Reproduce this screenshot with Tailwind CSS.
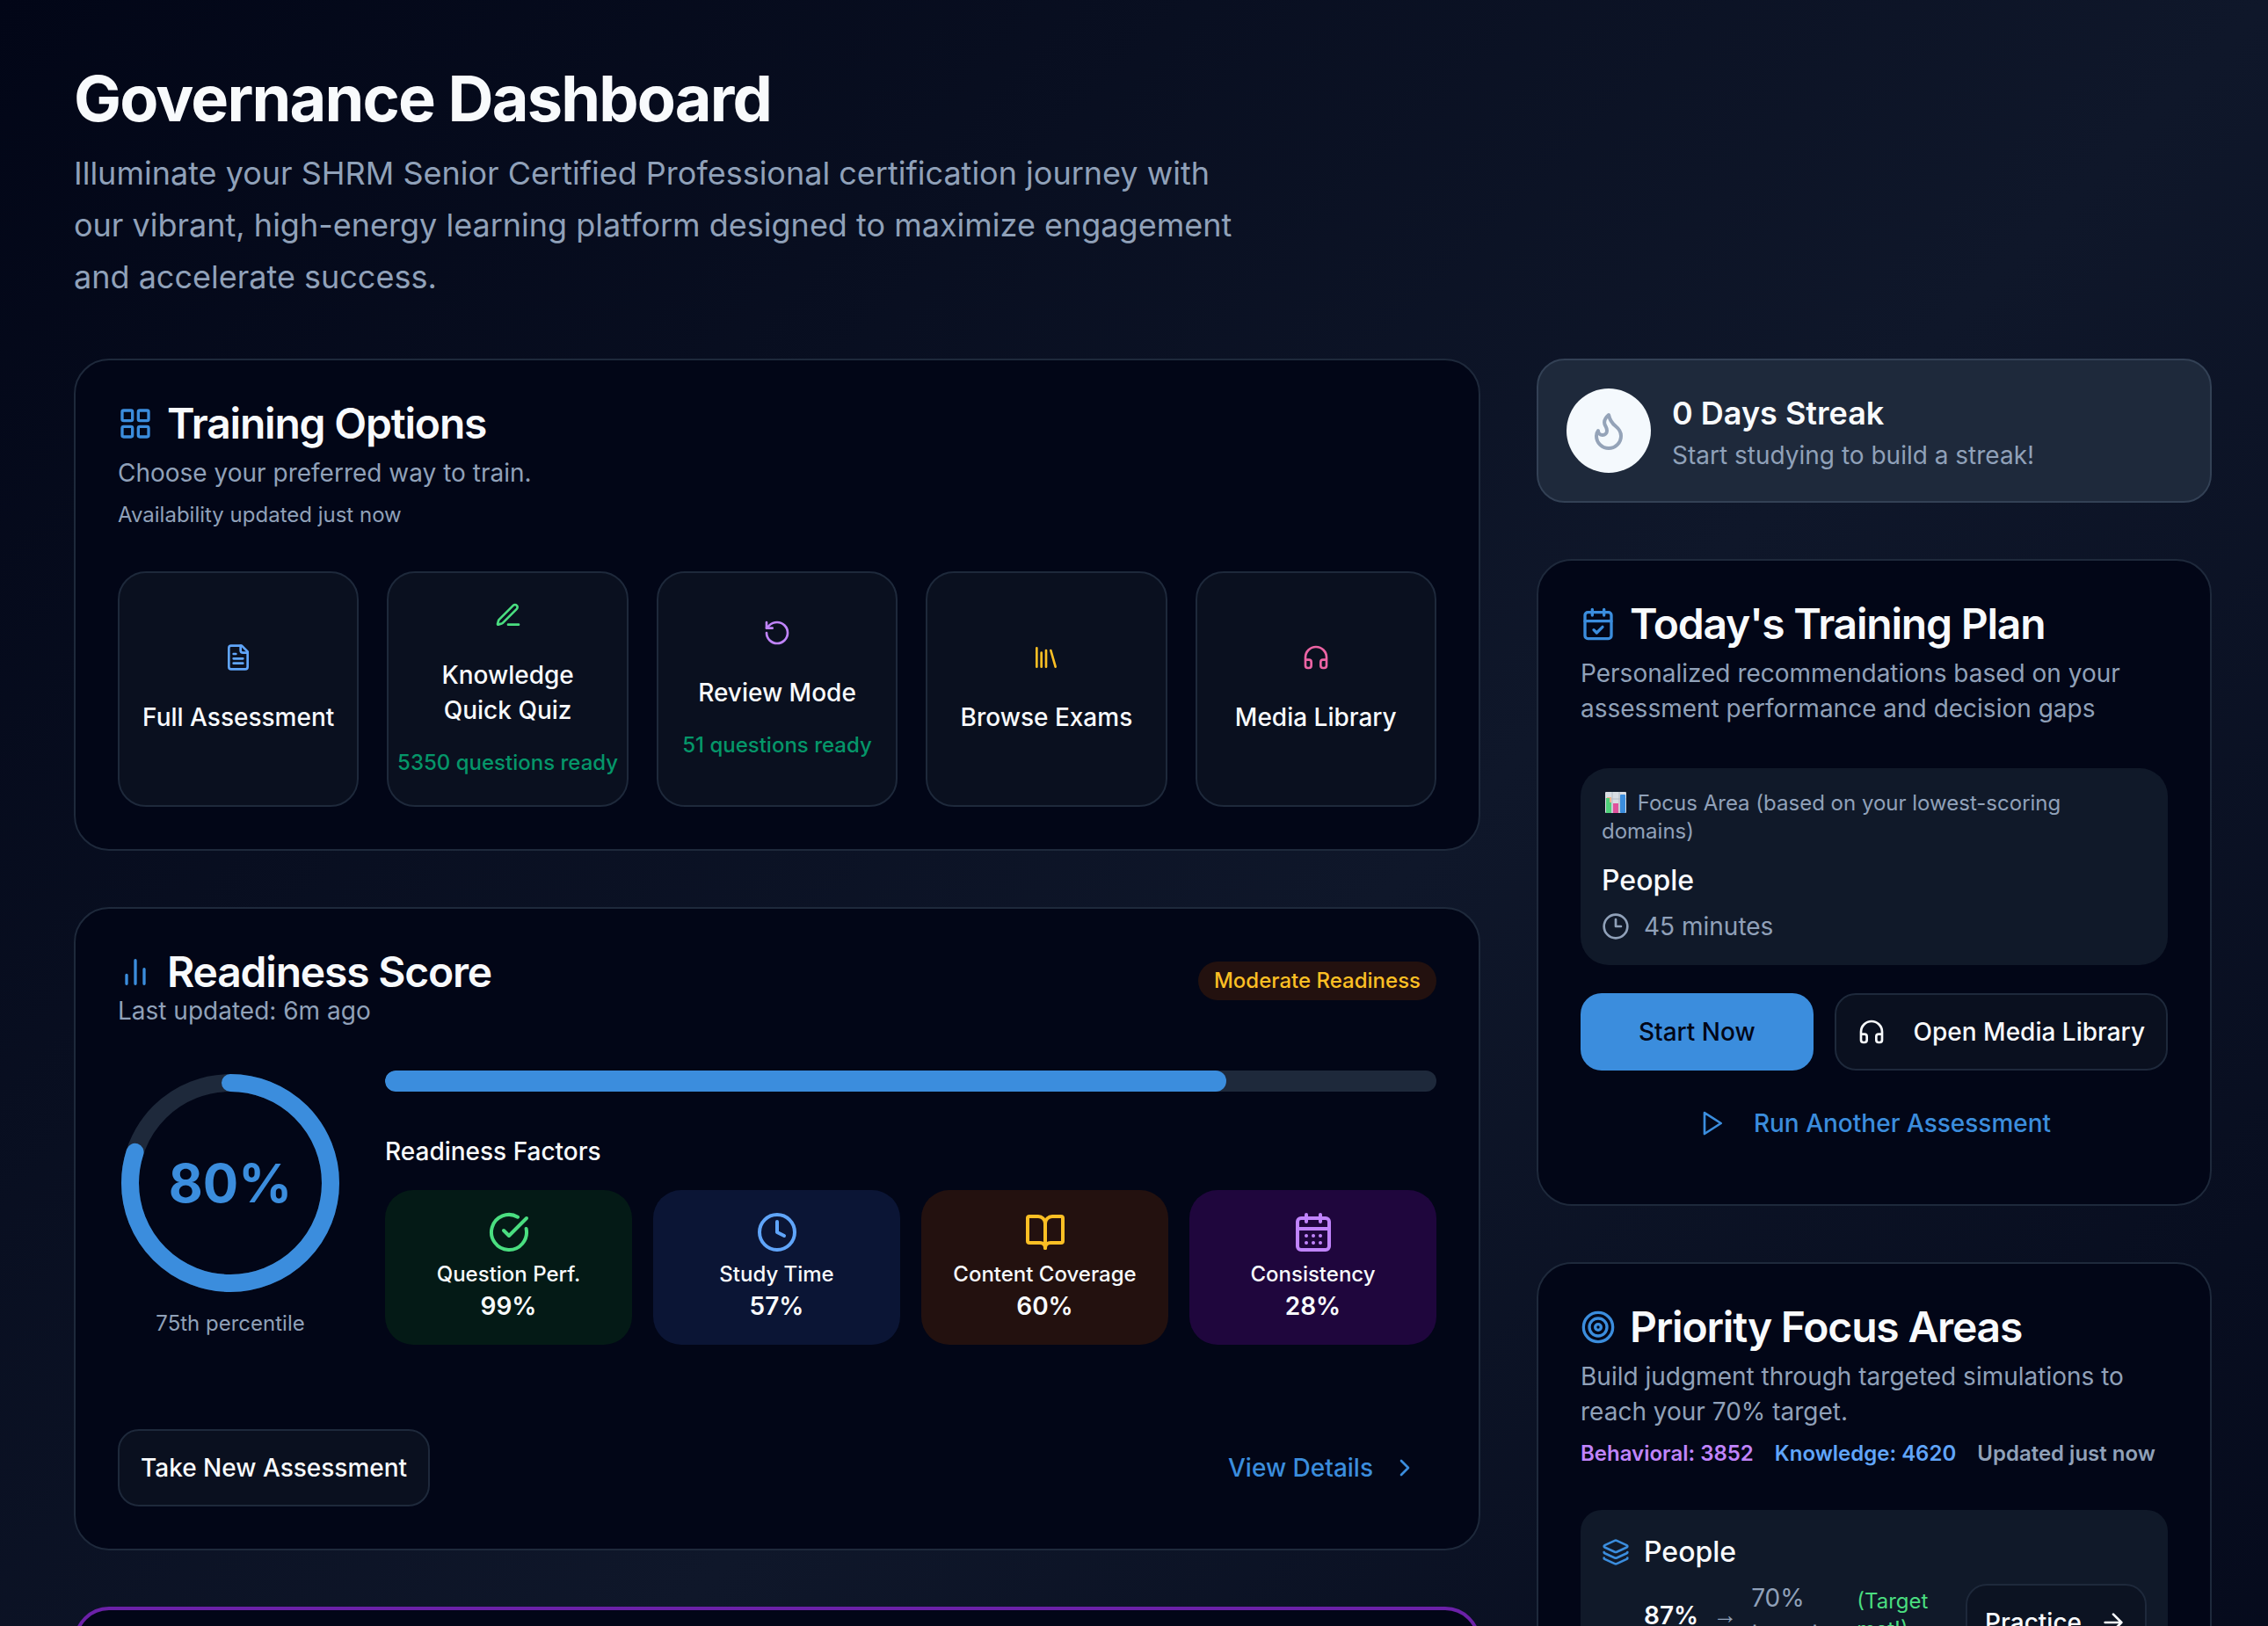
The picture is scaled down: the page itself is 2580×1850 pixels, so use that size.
<!doctype html>
<html lang="en">
  <head>
    <meta charset="UTF-8" />
    <meta name="viewport" content="width=device-width, initial-scale=1.0" />
    <title>Governance Dashboard</title>
    <script src="https://cdn.jsdelivr.net/npm/@tailwindcss/browser@4"></script>
  </head>
  <body class="h-screen overflow-hidden bg-[#020617] font-['Inter',sans-serif] text-[28px] leading-[40px] text-[#f8fafc]">
    <!-- shared icons, 24x24 grid -->
    <svg class="hidden">
      <symbol id="grid" viewBox="0 0 24 24">
        <rect width="7" height="7" x="3" y="3" rx="1" />
        <rect width="7" height="7" x="14" y="3" rx="1" />
        <rect width="7" height="7" x="14" y="14" rx="1" />
        <rect width="7" height="7" x="3" y="14" rx="1" />
      </symbol>
      <symbol id="headphones" viewBox="0 0 24 24">
        <path d="M3 14h3a2 2 0 0 1 2 2v3a2 2 0 0 1-2 2H5a2 2 0 0 1-2-2v-7a9 9 0 0 1 18 0v7a2 2 0 0 1-2 2h-1a2 2 0 0 1-2-2v-3a2 2 0 0 1 2-2h3" />
      </symbol>
    </svg>

    <div class="min-h-full bg-linear-to-br/srgb from-[#020617] via-[#0f172a] to-[#020617] pt-[72px] pr-16 pb-16 pl-[84px]">
      <header class="mb-[63px]">
        <h1 class="text-[72px] leading-[80px] font-bold tracking-tight">Governance Dashboard</h1>
        <p class="mt-4 max-w-[1344px] text-[36px] leading-[59px] text-slate-400">
          Illuminate your SHRM Senior Certified Professional certification journey with our vibrant, high-energy
          learning platform designed to maximize engagement and accelerate success.
        </p>
      </header>

      <main class="grid grid-cols-3 items-start gap-16">
        <div class="col-span-2 flex flex-col gap-16">
          <section class="rounded-[40px] border-2 border-[#1e293b] bg-[#020617] p-12">
            <h2 class="flex items-center gap-4 text-[48px] leading-[48px] font-semibold tracking-tight">
              <svg class="size-10 fill-none stroke-[#3b8ddd] stroke-2" stroke-linecap="round" stroke-linejoin="round"><use href="#grid" /></svg>
              Training Options
            </h2>
            <p class="mt-3 text-slate-400">Choose your preferred way to train.</p>
            <p class="mt-3 text-[24px] leading-[32px] text-slate-400">Availability updated just now</p>

            <div class="mt-12 grid grid-cols-5 gap-8 font-medium">
              <button class="flex flex-col items-center justify-center rounded-[32px] border-2 border-[#1e293b] bg-[#0a101f] py-8">
                <svg class="size-8 fill-none stroke-[#60a5fa] stroke-2" viewBox="0 0 24 24" stroke-linecap="round" stroke-linejoin="round">
                  <path d="M15 2H6a2 2 0 0 0-2 2v16a2 2 0 0 0 2 2h12a2 2 0 0 0 2-2V7Z" />
                  <path d="M14 2v4a2 2 0 0 0 2 2h4M10 9H8M16 13H8M16 17H8" />
                </svg>
                <span class="mt-8">Full Assessment</span>
              </button>
              <button class="flex flex-col items-center justify-center rounded-[32px] border-2 border-[#1e293b] bg-[#0a101f] py-8">
                <svg class="size-8 fill-none stroke-[#4ade80] stroke-2" viewBox="0 0 24 24" stroke-linecap="round" stroke-linejoin="round">
                  <path d="M12 20h9" />
                  <path d="M16.376 3.622a1 1 0 0 1 3.002 3.002L7.368 18.635a2 2 0 0 1-.855.506l-2.872.838a.5.5 0 0 1-.62-.62l.838-2.872a2 2 0 0 1 .506-.854z" />
                </svg>
                <span class="mt-8 px-8">Knowledge Quick Quiz</span>
                <span class="mt-6 text-[24px] leading-[32px] whitespace-nowrap text-[#059669]">5350 questions ready</span>
              </button>
              <button class="flex flex-col items-center justify-center rounded-[32px] border-2 border-[#1e293b] bg-[#0a101f] py-8">
                <svg class="size-8 fill-none stroke-[#c084fc] stroke-2" viewBox="0 0 24 24" stroke-linecap="round" stroke-linejoin="round">
                  <path d="M3 12a9 9 0 1 0 9-9 9.75 9.75 0 0 0-6.74 2.74L3 8" />
                  <path d="M3 3v5h5" />
                </svg>
                <span class="mt-8">Review Mode</span>
                <span class="mt-6 text-[24px] leading-[32px] whitespace-nowrap text-[#059669]">51 questions ready</span>
              </button>
              <button class="flex flex-col items-center justify-center rounded-[32px] border-2 border-[#1e293b] bg-[#0a101f] py-8">
                <svg class="size-8 fill-none stroke-[#fbbf24] stroke-2" viewBox="0 0 24 24" stroke-linecap="round" stroke-linejoin="round">
                  <path d="m16 6 4 14M12 6v14M8 8v12M4 4v16" />
                </svg>
                <span class="mt-8">Browse Exams</span>
              </button>
              <button class="flex flex-col items-center justify-center rounded-[32px] border-2 border-[#1e293b] bg-[#0a101f] py-8">
                <svg class="size-8 fill-none stroke-[#ec64a4] stroke-2" stroke-linecap="round" stroke-linejoin="round"><use href="#headphones" /></svg>
                <span class="mt-8">Media Library</span>
              </button>
            </div>
          </section>

          <section class="rounded-[40px] border-2 border-[#1e293b] bg-[#020617] p-12">
            <div class="flex items-start justify-between">
              <div>
                <h2 class="flex items-center gap-4 text-[48px] leading-[48px] font-semibold tracking-tight">
                  <svg class="size-10 fill-none stroke-[#3b8ddd] stroke-2" viewBox="0 0 24 24" stroke-linecap="round" stroke-linejoin="round">
                    <path d="M18 20V10M12 20V4M6 20v-6" />
                  </svg>
                  Readiness Score
                </h2>
                <p class="text-slate-400">Last updated: 6m ago</p>
              </div>
              <span class="mt-3 rounded-full bg-[#23110f] px-[18px] py-[6px] text-[24px] leading-[32px] font-medium text-[#fbbf24]">Moderate Readiness</span>
            </div>

            <div class="mt-12 flex gap-12">
              <div class="flex flex-col items-center">
                <div class="grid size-64 place-items-center">
                  <svg class="col-start-1 row-start-1 size-64 -rotate-90 fill-none" viewBox="0 0 256 256">
                    <circle cx="128" cy="128" r="114" stroke="#1e293b" stroke-width="20" />
                    <circle cx="128" cy="128" r="114" stroke="#3b8ddd" stroke-width="20" stroke-linecap="round" pathLength="100" stroke-dasharray="80 100" />
                  </svg>
                  <span class="col-start-1 row-start-1 text-[60px] leading-[60px] font-bold text-[#3b8ddd]">80%</span>
                </div>
                <p class="mt-4 text-[24px] leading-[32px] text-slate-400">75th percentile</p>
              </div>

              <div class="flex-1">
                <div class="h-6 overflow-hidden rounded-full bg-[#1e293b]" role="progressbar" aria-label="Readiness" aria-valuenow="80" aria-valuemin="0" aria-valuemax="100">
                  <div class="h-full rounded-full bg-[#3b8ddd]" style="width: 80%"></div>
                </div>
                <h3 class="mt-12 font-medium">Readiness Factors</h3>
                <div class="mt-6 grid grid-cols-4 gap-6 text-center">
                  <div class="flex flex-col items-center rounded-[32px] bg-[#041a16] py-6">
                    <svg class="size-12 fill-none stroke-[#4ade80] stroke-2" viewBox="0 0 24 24" stroke-linecap="round" stroke-linejoin="round">
                      <path d="M21.801 10A10 10 0 1 1 17 3.335" />
                      <path d="m9 11 3 3L22 4" />
                    </svg>
                    <p class="mt-2 text-[24px] leading-[32px] font-medium">Question Perf.</p>
                    <p class="font-semibold">99%</p>
                  </div>
                  <div class="flex flex-col items-center rounded-[32px] bg-[#0b1535] py-6">
                    <svg class="size-12 fill-none stroke-[#60a5fa] stroke-2" viewBox="0 0 24 24" stroke-linecap="round" stroke-linejoin="round">
                      <circle cx="12" cy="12" r="10" />
                      <path d="M12 6v6l4 2" />
                    </svg>
                    <p class="mt-2 text-[24px] leading-[32px] font-medium">Study Time</p>
                    <p class="font-semibold">57%</p>
                  </div>
                  <div class="flex flex-col items-center rounded-[32px] bg-[#23110f] py-6">
                    <svg class="size-12 fill-none stroke-[#fbbf24] stroke-2" viewBox="0 0 24 24" stroke-linecap="round" stroke-linejoin="round">
                      <path d="M12 7v14" />
                      <path d="M3 18a1 1 0 0 1-1-1V4a1 1 0 0 1 1-1h5a4 4 0 0 1 4 4 4 4 0 0 1 4-4h5a1 1 0 0 1 1 1v13a1 1 0 0 1-1 1h-6a3 3 0 0 0-3 3 3 3 0 0 0-3-3z" />
                    </svg>
                    <p class="mt-2 text-[24px] leading-[32px] font-medium">Content Coverage</p>
                    <p class="font-semibold">60%</p>
                  </div>
                  <div class="flex flex-col items-center rounded-[32px] bg-[#1f063d] py-6">
                    <svg class="size-12 fill-none stroke-[#c084fc] stroke-2" viewBox="0 0 24 24" stroke-linecap="round" stroke-linejoin="round">
                      <rect width="18" height="18" x="3" y="4" rx="2" />
                      <path d="M8 2v4M16 2v4M3 10h18M8 14h.01M12 14h.01M16 14h.01M8 18h.01M12 18h.01M16 18h.01" />
                    </svg>
                    <p class="mt-2 text-[24px] leading-[32px] font-medium">Consistency</p>
                    <p class="font-semibold">28%</p>
                  </div>
                </div>
              </div>
            </div>

            <div class="mt-24 flex items-center justify-between font-medium">
              <button class="h-[88px] rounded-3xl border-2 border-[#1e293b] bg-[#0a101f] px-6">Take New Assessment</button>
              <a href="#details" class="flex h-[88px] items-center gap-5 px-5 text-[#3b8ddd]">
                View Details
                <svg class="size-8 fill-none stroke-current stroke-2" viewBox="0 0 24 24" stroke-linecap="round" stroke-linejoin="round">
                  <path d="m9 18 6-6-6-6" />
                </svg>
              </a>
            </div>
          </section>

          <section class="min-h-[720px] rounded-[40px] border-4 border-[#6b21a8] bg-[#020617]"></section>
        </div>

        <div class="flex flex-col gap-16">
          <section class="flex items-center gap-6 rounded-[32px] border-2 border-[#334155] bg-[#1e293b] p-8">
            <div class="flex size-24 items-center justify-center rounded-full bg-[#f4f9fd]">
              <svg class="size-12 fill-none stroke-[#94a3b8] stroke-2" viewBox="0 0 24 24" stroke-linecap="round" stroke-linejoin="round">
                <path d="M8.5 14.5A2.5 2.5 0 0 0 11 12c0-1.38-.5-2-1-3-1.072-2.143-.224-4.054 2-6 .5 2.5 2 4.9 4 6.5 2 1.6 3 3.5 3 5.5a7 7 0 1 1-14 0c0-1.153.433-2.294 1-3a2.5 2.5 0 0 0 2.5 2.5z" />
              </svg>
            </div>
            <div>
              <h2 class="text-[36px] leading-[56px] font-semibold">0 Days Streak</h2>
              <p class="text-slate-400">Start studying to build a streak!</p>
            </div>
          </section>

          <section class="rounded-[40px] border-2 border-[#1e293b] bg-[#020617] p-12">
            <h2 class="flex items-center gap-4 text-[48px] leading-[48px] font-semibold tracking-tight">
              <svg class="size-10 fill-none stroke-[#3b8ddd] stroke-2" viewBox="0 0 24 24" stroke-linecap="round" stroke-linejoin="round">
                <rect width="18" height="18" x="3" y="4" rx="2" />
                <path d="M8 2v4M16 2v4M3 10h18M9 16l2 2 4-4" />
              </svg>
              Today's Training Plan
            </h2>
            <p class="mt-3 text-slate-400">Personalized recommendations based on your assessment performance and decision gaps</p>

            <div class="mt-12 rounded-[32px] bg-[#101929] p-6">
              <p class="text-[24px] leading-[32px] text-slate-400">
                <svg class="inline-block h-6 w-[34px] align-[-3px]" viewBox="0 0 34 24" role="img" aria-label="Bar chart">
                  <rect x="4" width="24" height="24" rx="1" fill="#d9dde3" />
                  <path d="M4 8h24M12 0v24M20 0v24" stroke="#b4bcc6" />
                  <rect x="6" y="6" width="5" height="18" fill="#f0b48a" />
                  <path d="M5 7h4v5h2v12H5z" fill="#4fd07a" />
                  <rect x="13" y="13" width="6" height="11" fill="#e0529c" />
                  <rect x="21" y="3" width="6" height="21" rx="1" fill="#3b8ddd" />
                </svg>
                Focus Area (based on your lowest-scoring domains)
              </p>
              <h3 class="mt-4 text-[32px] leading-[48px] font-medium">People</h3>
              <p class="mt-2 flex items-center gap-4 text-slate-400">
                <svg class="size-8 fill-none stroke-current stroke-2" viewBox="0 0 24 24" stroke-linecap="round" stroke-linejoin="round">
                  <circle cx="12" cy="12" r="10" />
                  <path d="M12 6v6h4.5" />
                </svg>
                45 minutes
              </p>
            </div>

            <div class="mt-8 flex gap-6 font-medium">
              <button class="h-[88px] flex-1 rounded-3xl bg-[#3b8ddd] text-[#020617]">Start Now</button>
              <button class="flex h-[88px] items-center gap-8 rounded-3xl border-2 border-[#1e293b] bg-[#0a101f] px-6">
                <svg class="size-8 fill-none stroke-current stroke-2" stroke-linecap="round" stroke-linejoin="round"><use href="#headphones" /></svg>
                Open Media Library
              </button>
            </div>
            <button class="mt-4 flex h-[88px] w-full items-center justify-center gap-8 font-medium text-[#3b8ddd]">
              <svg class="size-8 fill-none stroke-current stroke-2" viewBox="0 0 24 24" stroke-linecap="round" stroke-linejoin="round">
                <path d="m6 3 14 9-14 9V3z" />
              </svg>
              Run Another Assessment
            </button>
          </section>

          <section class="rounded-[40px] border-2 border-[#1e293b] bg-[#020617] p-12">
            <h2 class="flex items-center gap-4 text-[48px] leading-[48px] font-semibold tracking-tight">
              <svg class="size-10 fill-none stroke-[#3b8ddd] stroke-2" viewBox="0 0 24 24" stroke-linecap="round" stroke-linejoin="round">
                <circle cx="12" cy="12" r="10" />
                <circle cx="12" cy="12" r="6" />
                <circle cx="12" cy="12" r="2" />
              </svg>
              Priority Focus Areas
            </h2>
            <p class="mt-3 text-slate-400">Build judgment through targeted simulations to reach your 70% target.</p>
            <div class="mt-3 flex gap-6 text-[24px] leading-[32px] font-semibold whitespace-nowrap">
              <span class="text-[#c084fc]">Behavioral: 3852</span>
              <span class="text-[#60a5fa]">Knowledge: 4620</span>
              <span class="text-slate-400">Updated just now</span>
            </div>

            <div class="mt-12 rounded-3xl bg-[#101929] p-6">
              <h3 class="flex items-center gap-4 text-[32px] leading-[48px] font-medium">
                <svg class="size-8 fill-none stroke-[#3b8ddd] stroke-2" viewBox="0 0 24 24" stroke-linecap="round" stroke-linejoin="round">
                  <path d="M12.83 2.18a2 2 0 0 0-1.66 0L2.6 6.08a1 1 0 0 0 0 1.83l8.58 3.91a2 2 0 0 0 1.66 0l8.58-3.9a1 1 0 0 0 0-1.83z" />
                  <path d="M2 12a1 1 0 0 0 .58.91l8.6 3.91a2 2 0 0 0 1.65 0l8.58-3.9A1 1 0 0 0 22 12" />
                  <path d="M2 17a1 1 0 0 0 .58.91l8.6 3.91a2 2 0 0 0 1.65 0l8.58-3.9A1 1 0 0 0 22 17" />
                </svg>
                People
              </h3>
              <div class="mt-2 flex items-start justify-between pl-12">
                <div class="flex items-center gap-4">
                  <span class="font-semibold">87%</span>
                  <span class="font-['Liberation_Sans',sans-serif] text-slate-400">→</span>
                  <span class="w-26 text-slate-400">70% target</span>
                  <span class="w-24 text-[24px] leading-[32px] text-[#4ade80]">(Target met!)</span>
                </div>
                <button class="mt-1 flex h-[88px] items-center gap-5 rounded-3xl border-2 border-[#1e293b] bg-[#0c1322] px-5 font-medium">
                  Practice
                  <svg class="size-8 fill-none stroke-current stroke-2" viewBox="0 0 24 24" stroke-linecap="round" stroke-linejoin="round">
                    <path d="M5 12h14M12 5l7 7-7 7" />
                  </svg>
                </button>
              </div>
            </div>
          </section>
        </div>
      </main>
    </div>
  </body>
</html>
